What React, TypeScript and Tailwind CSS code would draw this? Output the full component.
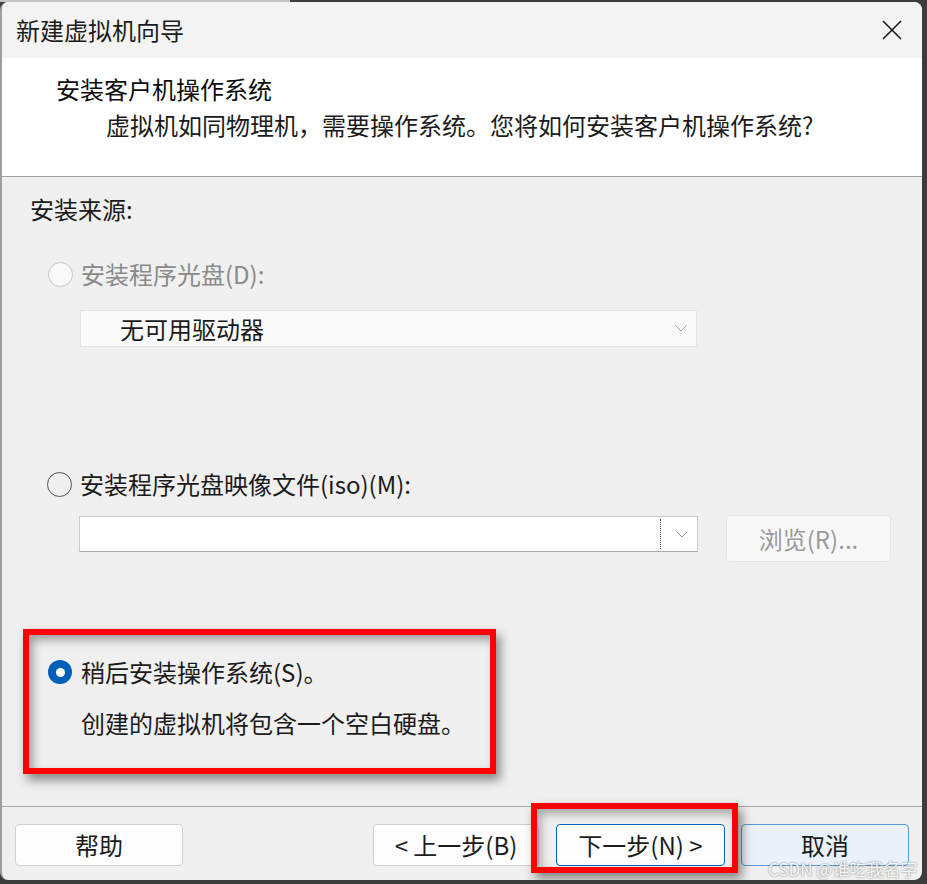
import type { ReactNode } from 'react';

function Chevron() {
  return (
    <svg width="12" height="7" viewBox="0 0 12 7" fill="none">
      <polyline points="0.5,0.5 6,6 11.5,0.5" stroke="#9a9a9a" strokeWidth="1" />
    </svg>
  );
}

function Radio({ state }: { state: 'disabled' | 'off' | 'on' }) {
  if (state === 'on') {
    return (
      <span className="flex h-[24px] w-[24px] shrink-0 items-center justify-center rounded-full bg-[#005fb8]">
        <span className="h-[9px] w-[9px] rounded-full bg-white" />
      </span>
    );
  }
  if (state === 'disabled') {
    return <span className="h-[25px] w-[25px] shrink-0 rounded-full border-[1.5px] border-[#c6c6c6] bg-[#f9f9f9]" />;
  }
  return <span className="h-[25px] w-[25px] shrink-0 rounded-full border-[1.5px] border-[#505050]" />;
}

function Button({ children, className }: { children: ReactNode; className: string }) {
  return (
    <div className={`flex h-[42px] items-center justify-center rounded-[4px] border text-[24px] leading-[26px] text-[#1b1b1b] ${className}`}>
      {children}
    </div>
  );
}

export default function App() {
  return (
    <div className="relative h-[884px] w-[927px] overflow-hidden bg-[#3c3c3c] font-['Noto_Sans_CJK_SC','Noto_Sans',sans-serif]">
      <div className="flex h-[2px]">
        <div className="w-[290px] bg-[#c4c4c4]" />
        <div className="flex-1 bg-[#3c3c3c]" />
      </div>

      <div className="flex h-[878px] w-[922px] flex-col overflow-hidden rounded-[8px] border-l-2 border-[#9e9e9e] bg-[#f0f0f0]">
        {/* title bar */}
        <div className="flex h-[56px] shrink-0 items-center justify-between bg-[#f3f3f3] pl-[14px] pr-[20px]">
          <span className="text-[24px] leading-[28px] text-[#1b1b1b]">新建虚拟机向导</span>
          <svg width="20" height="20" viewBox="0 0 20 20">
            <path d="M1 1L19 19M19 1L1 19" stroke="#1b1b1b" strokeWidth="1.6" />
          </svg>
        </div>

        {/* header */}
        <div className="h-[119px] shrink-0 border-b border-[#a0a0a0] bg-white pl-[54px] pt-[17px]">
          <div className="text-[24px] leading-[28px] text-[#0d0d0d]">安装客户机操作系统</div>
          <div className="ml-[50px] mt-[8px] text-[24px] leading-[28px] text-[#1b1b1b]">
            虚拟机如同物理机，需要操作系统。您将如何安装客户机操作系统?
          </div>
        </div>

        {/* body */}
        <div className="flex h-[629px] shrink-0 flex-col pt-[18px] text-[24px] leading-[28px] text-[#1b1b1b]">
          <div className="ml-[28px]">安装来源:</div>

          <div className="ml-[46px] mt-[37px] flex items-center gap-[8px]">
            <Radio state="disabled" />
            <span className="text-[#8a8a8a]">安装程序光盘(D):</span>
          </div>

          <div className="ml-[78px] mt-[22px] flex h-[37px] w-[617px] items-center justify-between border border-[#e6e6e6] bg-[#fafafa] pl-[39px] pr-[9px]">
            <span>无可用驱动器</span>
            <Chevron />
          </div>

          <div className="ml-[45px] mt-[123px] flex items-center gap-[8px]">
            <Radio state="off" />
            <span>安装程序光盘映像文件(iso)(M):</span>
          </div>

          <div className="mt-[17px] flex items-start">
            <div className="ml-[77px] mt-[1px] flex h-[36px] w-[619px] items-center justify-end border border-[#cbcbcb] border-b-[#a8a8a8] bg-white pr-[9px]">
              <span className="mr-[15px] h-[30px] border-l border-dotted border-[#444]" />
              <Chevron />
            </div>
            <div className="ml-[28px] flex h-[47px] w-[165px] items-center justify-center rounded-[4px] border border-[#e6e6e6] bg-[#f8f8f8] text-[#9a9a9a]">
              浏览(R)...
            </div>
          </div>

          <div className="ml-[21px] mt-[67px] h-[145px] w-[473px] border-[6px] border-[#ff0000] pl-[19px] pt-[23px] shadow-[4px_6px_10px_rgba(0,0,0,0.45),inset_4px_5px_10px_rgba(0,0,0,0.35)]">
            <div className="flex items-center gap-[9px]">
              <Radio state="on" />
              <span>稍后安装操作系统(S)。</span>
            </div>
            <div className="ml-[33px] mt-[23px]">创建的虚拟机将包含一个空白硬盘。</div>
          </div>
        </div>

        {/* footer */}
        <div className="relative flex flex-1 items-start border-t border-[#a8a8a8] pt-[17px]">
          <Button className="ml-[13px] w-[168px] border-[#d0d0d0] bg-[#fdfdfd]">帮助</Button>
          <Button className="ml-auto w-[166px] border-[#d0d0d0] bg-[#fdfdfd]">&lt; 上一步(B)</Button>
          <Button className="ml-[17px] w-[169px] border-[#0067c0] bg-[#fdfdfd]">下一步(N) &gt;</Button>
          <Button className="ml-[16px] mr-[13px] w-[168px] border-[#5b9bd5] bg-[#e9f1fa]">取消</Button>

          <div className="absolute left-[529px] top-[-4px] h-[70px] w-[207px] border-[6px] border-[#ff0000] shadow-[4px_6px_10px_rgba(0,0,0,0.45),inset_4px_5px_10px_rgba(0,0,0,0.3)]" />
          <div className="absolute left-[766px] top-[53px] text-[17px] leading-[17px] text-white/90 [text-shadow:0_0_2px_rgba(0,0,0,0.55)]">
            CSDN @谁吃我名字
          </div>
        </div>
      </div>
    </div>
  );
}
